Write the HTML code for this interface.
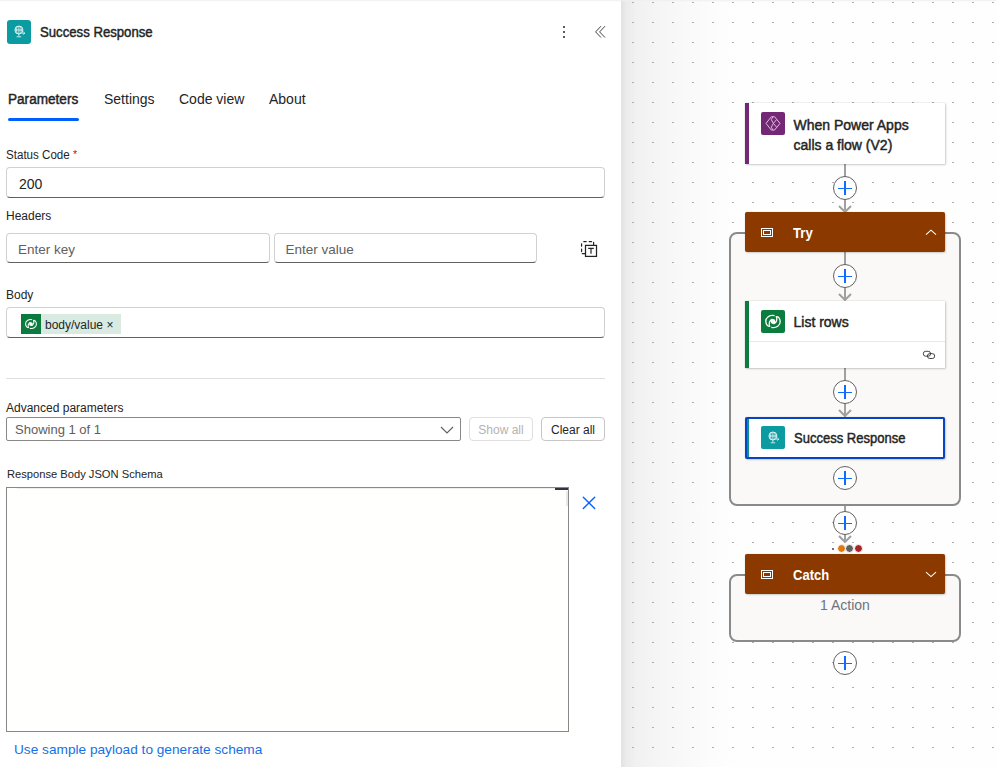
<!DOCTYPE html>
<html><head><meta charset="utf-8">
<style>
*{box-sizing:border-box;margin:0;padding:0}
html,body{width:996px;height:767px;overflow:hidden;background:#fff;font-family:"Liberation Sans",sans-serif;color:#242424}
.t{position:absolute;white-space:nowrap;line-height:1;transform-origin:0 0}
.sb{font-weight:400;-webkit-text-stroke:0.45px currentColor}
#panel{position:absolute;left:0;top:0;width:621px;height:767px;background:#fff}
#canvas{position:absolute;left:621px;top:0;width:375px;height:767px;background:#fefefe;overflow:hidden}
.box{position:absolute;border:1px solid #d1d1d1;border-bottom-color:#616161;border-radius:4px;background:#fff}
.btn{position:absolute;border:1px solid #d1d1d1;border-radius:4px;background:#fff;font-size:12px;text-align:center}
.card{position:absolute;background:#fff;box-shadow:0 0 1px rgba(0,0,0,.28),1px 1px 2px rgba(0,0,0,.16)}
.plus{position:absolute;width:24px;height:24px;border-radius:50%;border:1px solid #616161;background:#fff}
.plus:before{content:"";position:absolute;left:4px;top:10.5px;width:14px;height:1.6px;background:#0f6cff}
.plus:after{content:"";position:absolute;left:10.2px;top:4px;width:1.6px;height:14px;background:#0f6cff}
.vline{position:absolute;width:2px;background:#a0a0a0}
</style></head><body>
<div id="panel">
  <div style="position:absolute;left:0;top:0;width:621px;height:2px;background:linear-gradient(#f0f0f0,#fff)"></div>
  <!-- header icon -->
  <div style="position:absolute;left:7px;top:20px;width:24px;height:24px;background:#0b9ba0;border-radius:3px"></div>
  <svg style="position:absolute;left:7px;top:20px" width="24" height="24" viewBox="0 0 24 24"><circle cx="11.9" cy="10" r="4" fill="none" stroke="#fff" stroke-width="0.85"/><path d="M8 10h7.8M11.9 6v8M10.2 6.4c-.8 2.3-.8 4.9 0 7.2M13.6 6.4c.8 2.3.8 4.9 0 7.2M11.9 14v2.2M9.6 16.8h4.6" fill="none" stroke="#fff" stroke-width="0.75"/><path d="M16.4 11.8l1.4 1.4-1.4 1.4M15.2 13.2h2.4" fill="none" stroke="#fff" stroke-width="0.8"/></svg>
  <div id="title" class="t sb" style="left:40px;top:24.6px;font-size:14px;transform:scaleX(0.94)">Success Response</div>
  <!-- kebab -->
  <div style="position:absolute;left:562.6px;top:25.6px;width:2.6px;height:2.6px;border-radius:50%;background:#242424"></div>
  <div style="position:absolute;left:562.6px;top:30.6px;width:2.6px;height:2.6px;border-radius:50%;background:#242424"></div>
  <div style="position:absolute;left:562.6px;top:35.6px;width:2.6px;height:2.6px;border-radius:50%;background:#242424"></div>
  <svg style="position:absolute;left:594px;top:25px" width="14" height="14" viewBox="0 0 14 14"><path d="M7 1.2L1.6 6.9l5.4 5.6M11 1.2L5.6 6.9l5.4 5.6" fill="none" stroke="#424242" stroke-width="1"/></svg>

  <!-- tabs -->
  <div id="tab1" class="t sb" style="left:8px;top:92px;font-size:14px;transform:scaleX(0.97)">Parameters</div>
  <div style="position:absolute;left:8px;top:118px;width:71px;height:3px;border-radius:2px;background:#0060ff"></div>
  <div id="tab2" class="t" style="left:104px;top:92px;font-size:14px">Settings</div>
  <div id="tab3" class="t" style="left:179px;top:92px;font-size:14px">Code view</div>
  <div id="tab4" class="t" style="left:269px;top:92px;font-size:14px">About</div>

  <!-- status code -->
  <div id="lbl1" class="t" style="left:6px;top:148.8px;font-size:12px;transform:scaleX(0.965)">Status Code <span style="color:#b0101e;font-size:11px;position:relative;top:-0.5px">*</span></div>
  <div class="box" style="left:6px;top:167px;width:599px;height:31px"></div>
  <div id="v200" class="t" style="left:19px;top:177px;font-size:14px">200</div>

  <!-- headers -->
  <div id="lbl2" class="t" style="left:6px;top:210px;font-size:12px">Headers</div>
  <div class="box" style="left:6px;top:233px;width:264px;height:30px"></div>
  <div class="box" style="left:274px;top:233px;width:263px;height:30px"></div>
  <div class="t" style="left:18px;top:242.6px;font-size:13.5px;color:#616161">Enter key</div>
  <div class="t" style="left:285.5px;top:242.6px;font-size:13.5px;color:#616161">Enter value</div>

  <svg style="position:absolute;left:576px;top:236px" width="26" height="26" viewBox="0 0 26 26"><path d="M7.8 5.6h2.4M13.2 5.6h2.4M17.6 6.3v3M5.6 7.8v2.4M5.6 13.2v2.4M6.3 17.6h3" fill="none" stroke="#242424" stroke-width="1.2" stroke-linecap="round"/><rect x="9.5" y="9.4" width="11" height="11" fill="#fff" stroke="#242424" stroke-width="1.25"/><path d="M12.2 12.4h5.6M15 12.4v5.3" fill="none" stroke="#242424" stroke-width="1.2"/></svg>
  <!-- body -->
  <div id="lbl3" class="t" style="left:6px;top:289px;font-size:12px">Body</div>
  <div class="box" style="left:6px;top:307px;width:599px;height:31px"></div>
  <div style="position:absolute;left:21px;top:314px;width:100px;height:20px;background:#d9ebe1"></div>
  <div style="position:absolute;left:21px;top:314px;width:20px;height:20px;background:#0b7a3e"></div>
  <svg style="position:absolute;left:22px;top:315px" width="18" height="18" viewBox="0 0 24 24"><g transform="translate(0,0.5)"><path d="M13.6 5.7C8.5 4.6 4.6 7.8 4.8 11.5C5 14.5 6.6 16.6 8.6 16.3C7.6 13.6 8.4 10 11.4 9.1M10.3 17.3C15.5 18.4 19.4 15.2 19.2 11.5C19 8.5 17.4 6.4 15.4 6.7C16.4 9.4 15.6 13 12.6 13.9" fill="none" stroke="#fff" stroke-width="1.4"/><circle cx="12" cy="11.5" r="2.5" fill="#fff"/></g></svg>
  <div class="t" style="left:45px;top:319px;font-size:12px">body/value <span style="font-size:12px">×</span></div>

  <div style="position:absolute;left:6px;top:378px;width:599px;height:1px;background:#e0e0e0"></div>

  <!-- advanced -->
  <div id="lbl4" class="t" style="left:6px;top:402px;font-size:12px">Advanced parameters</div>
  <div class="box" style="left:6px;top:417px;width:455px;height:24px;border-color:#8a8886;border-radius:2px"></div>
  <div class="t" style="left:15px;top:423px;font-size:13px;color:#605e5c">Showing 1 of 1</div>
  <svg style="position:absolute;left:440px;top:425px" width="14" height="10"><path d="M1 2l6 6 6-6" fill="none" stroke="#605e5c" stroke-width="1.1"/></svg>
  <div class="btn" style="left:469px;top:417px;width:64px;height:24px;color:#b3b3b3;border-color:#e1dfdd;line-height:24px">Show all</div>
  <div class="btn" style="left:541px;top:417px;width:64px;height:24px;color:#242424;border-color:#c8c6c4;line-height:24px">Clear all</div>

  <!-- schema -->
  <div id="lbl5" class="t" style="left:6.5px;top:468.8px;font-size:11.5px;transform:scaleX(0.97)">Response Body JSON Schema</div>
  <div style="position:absolute;left:6px;top:487px;width:563px;height:245px;border:1px solid #8a8886;background:#fffffe"></div>
  <div style="position:absolute;left:17px;top:488px;width:538px;height:1px;background:#efefed"></div>
  <div style="position:absolute;left:555px;top:488px;width:13px;height:2px;background:#33323e"></div>
  <div style="position:absolute;left:566px;top:491px;width:1.6px;height:15px;background:#e8e8e8"></div>
  <svg style="position:absolute;left:581px;top:495px" width="16" height="16"><path d="M2.3 2.2L13.7 13.5M13.7 2.2L2.3 13.5" fill="none" stroke="#0062ff" stroke-width="1.4" stroke-linecap="round"/></svg>
  <div class="t" style="left:13.5px;top:743.4px;font-size:13.5px;color:#1570e6;transform:scaleX(1.012)">Use sample payload to generate schema</div>
</div>

<div id="canvas">
  <div style="position:absolute;left:0;top:0;width:120px;height:767px;background:linear-gradient(90deg,#e2e2e2 0,#ebebeb 5px,#f1f1f1 15px,#f5f5f5 35px,#f8f8f8 58px,#fbfbfb 80px,#fdfdfd 100px,rgba(254,254,254,0) 120px)"></div>
  <svg style="position:absolute;left:0;top:0" width="375" height="767">
    <defs>
      <pattern id="dp1" x="11" y="2" width="20" height="20" patternUnits="userSpaceOnUse"><rect width="2" height="1" fill="#adadb3"/></pattern>
      <pattern id="dp2" x="11" y="7" width="20" height="20" patternUnits="userSpaceOnUse"><rect width="2" height="1" fill="#adadb3"/></pattern>
    </defs>
    <rect x="0" y="0" width="375" height="670" fill="url(#dp1)"/>
    <rect x="0" y="670" width="375" height="97" fill="url(#dp2)"/>
  </svg>
  <div style="position:absolute;left:0;top:0;width:375px;height:2px;background:linear-gradient(#efefef,rgba(250,250,250,0))"></div>
</div>
<div id="flow" style="position:absolute;left:0;top:0;width:996px;height:767px">
  <!-- containers -->
  <div style="position:absolute;left:729px;top:232px;width:232px;height:274px;border:2px solid #8a8a8a;border-radius:8px;background:#faf9f8"></div>
  <div style="position:absolute;left:729px;top:574px;width:232px;height:68px;border:2px solid #8a8a8a;border-radius:8px;background:#faf9f8"></div>

  <!-- connectors -->
  <div class="vline" style="left:844px;top:164px;height:46px"></div>
  <div class="vline" style="left:844px;top:252px;height:47px"></div>
  <div class="vline" style="left:844px;top:368px;height:47px"></div>
  <div class="vline" style="left:844px;top:506px;height:36px"></div>
  <svg style="position:absolute;left:838px;top:205px" width="14" height="8"><path d="M1 1l6 6 6-6" fill="none" stroke="#a0a0a0" stroke-width="2"/></svg>
  <svg style="position:absolute;left:838px;top:293px" width="14" height="8"><path d="M1 1l6 6 6-6" fill="none" stroke="#a0a0a0" stroke-width="2"/></svg>
  <svg style="position:absolute;left:838px;top:409px" width="14" height="8"><path d="M1 1l6 6 6-6" fill="none" stroke="#a0a0a0" stroke-width="2"/></svg>
  <svg style="position:absolute;left:838px;top:535px" width="14" height="8"><path d="M1 1l6 6 6-6" fill="none" stroke="#a0a0a0" stroke-width="2"/></svg>

  <!-- plus buttons -->
  <div class="plus" style="left:833px;top:176px"></div>
  <div class="plus" style="left:833px;top:264px"></div>
  <div class="plus" style="left:833px;top:380px"></div>
  <div class="plus" style="left:833px;top:466px"></div>
  <div class="plus" style="left:833px;top:511px"></div>
  <div class="plus" style="left:833px;top:651px"></div>

  <!-- trigger card -->
  <div class="card" style="left:745px;top:103px;width:200px;height:61px;border-left:4px solid #742774;border-radius:0"></div>
  <div style="position:absolute;left:761px;top:112px;width:24px;height:23px;background:#742774;border-radius:2px"></div>
  <svg style="position:absolute;left:761px;top:112px" width="24" height="23" viewBox="0 0 24 23"><path d="M5 11.4L10.4 4.7H13.5L19 11.4L13.5 18.1H10.4Z" fill="none" stroke="#dcc0dc" stroke-width="1"/><path d="M12 4.8L10.3 7.6L12.4 11.4L10.3 15.2L12 18M12.4 11.4L15.5 7.7M12.4 11.4L15.5 15.1" fill="none" stroke="#dcc0dc" stroke-width="0.95"/></svg>
  <div class="t sb" style="left:793.5px;top:115px;font-size:14px;line-height:20px">When Power Apps<br>calls a flow (V2)</div>

  <!-- try header -->
  <div class="card" style="left:745px;top:212px;width:200px;height:40px;background:#8c3900;border-radius:2px"></div>
  <div style="position:absolute;left:761px;top:228px;width:12px;height:9px;border:1.2px solid #fff"></div>
  <div style="position:absolute;left:763.2px;top:230.2px;width:7.8px;height:5px;border:1.1px solid #fff"></div>
  <svg style="position:absolute;left:925px;top:229px" width="12" height="7"><path d="M1 5.6L6 1.2l5 4.4" fill="none" stroke="#fff" stroke-width="1.1"/></svg>
  <div id="try" class="t" style="left:793px;top:226px;font-size:14px;font-weight:700;color:#fff;transform:scaleX(0.94)">Try</div>

  <!-- list rows -->
  <div class="card" style="left:745px;top:301px;width:200px;height:67px;border-left:4px solid #0b7c3e;border-radius:0"></div>
  <div style="position:absolute;left:749px;top:341px;width:196px;height:1px;background:#e8e8e8"></div>
  <div style="position:absolute;left:761px;top:310px;width:24px;height:23px;background:#0b7c3e;border-radius:2px"></div>
  <svg style="position:absolute;left:761px;top:310px" width="24" height="23" viewBox="0 0 24 23"><path d="M13.6 5.7C8.5 4.6 4.6 7.8 4.8 11.5C5 14.5 6.6 16.6 8.6 16.3C7.6 13.6 8.4 10 11.4 9.1M10.3 17.3C15.5 18.4 19.4 15.2 19.2 11.5C19 8.5 17.4 6.4 15.4 6.7C16.4 9.4 15.6 13 12.6 13.9" fill="none" stroke="#fff" stroke-width="1.3"/><circle cx="12" cy="11.5" r="2.4" fill="#fff"/></svg>
  <div id="lr" class="t sb" style="left:793.5px;top:315px;font-size:14px">List rows</div>

  <svg style="position:absolute;left:915px;top:340px" width="30" height="25" viewBox="0 0 30 25"><rect x="8.3" y="11.3" width="7.3" height="4.9" rx="2.4" fill="none" stroke="#3a3a3a" stroke-width="0.95"/><rect x="12.4" y="13.6" width="7.3" height="4.9" rx="2.4" fill="none" stroke="#3a3a3a" stroke-width="0.95"/></svg>
  <!-- success response card -->
  <div class="card" style="left:745px;top:416.5px;width:200px;height:42px;border:2px solid #0544c4;border-radius:2px"></div>
  <div style="position:absolute;left:747px;top:418.5px;width:2px;height:38px;background:#0b8f94"></div>
  <div style="position:absolute;left:761px;top:426px;width:24px;height:23px;background:#0b9ba0;border-radius:2px"></div>
  <svg style="position:absolute;left:761px;top:426px" width="24" height="24" viewBox="0 0 24 24"><circle cx="11.9" cy="10" r="4" fill="none" stroke="#fff" stroke-width="0.85"/><path d="M8 10h7.8M11.9 6v8M10.2 6.4c-.8 2.3-.8 4.9 0 7.2M13.6 6.4c.8 2.3.8 4.9 0 7.2M11.9 14v2.2M9.6 16.8h4.6" fill="none" stroke="#fff" stroke-width="0.75"/><path d="M16.4 11.8l1.4 1.4-1.4 1.4M15.2 13.2h2.4" fill="none" stroke="#fff" stroke-width="0.8"/></svg>
  <div id="sr" class="t sb" style="left:793.5px;top:431px;font-size:14px;transform:scaleX(0.93)">Success Response</div>

  <!-- status dots -->
  <div style="position:absolute;left:832px;top:548px;width:2px;height:2px;border-radius:1px;background:#424242"></div>
  <div style="position:absolute;left:837px;top:544px;width:9px;height:9px;border-radius:50%;background:#e07a10;border:1px solid #fff"></div>
  <div style="position:absolute;left:845px;top:544px;width:9px;height:9px;border-radius:50%;background:#616161;border:1px solid #fff"></div>
  <div style="position:absolute;left:853.5px;top:544px;width:9px;height:9px;border-radius:50%;background:#a4262c;border:1px solid #fff"></div>

  <!-- catch header -->
  <div class="card" style="left:745px;top:554px;width:200px;height:40px;background:#8c3900;border-radius:2px"></div>
  <div style="position:absolute;left:761px;top:570px;width:12px;height:9px;border:1.2px solid #fff"></div>
  <div style="position:absolute;left:763.2px;top:572.2px;width:7.8px;height:5px;border:1.1px solid #fff"></div>
  <svg style="position:absolute;left:925px;top:571px" width="12" height="7"><path d="M1 1.2L6 5.6l5-4.4" fill="none" stroke="#fff" stroke-width="1.1"/></svg>
  <div id="catch" class="t" style="left:793px;top:568px;font-size:14px;font-weight:700;color:#fff;transform:scaleX(0.93)">Catch</div>
  <div id="act" class="t" style="left:820px;top:598px;font-size:14px;color:#6c7380">1 Action</div>
</div>
</body></html>
